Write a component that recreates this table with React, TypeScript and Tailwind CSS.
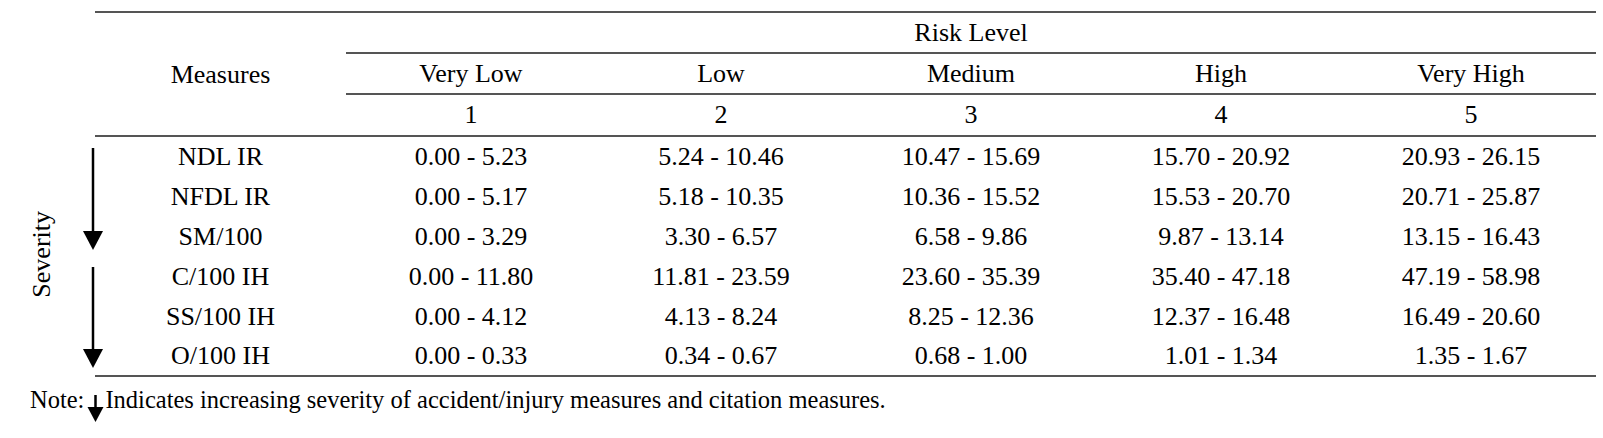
const LEVELS = [
  { name: "Very Low", rank: 1 },
  { name: "Low", rank: 2 },
  { name: "Medium", rank: 3 },
  { name: "High", rank: 4 },
  { name: "Very High", rank: 5 },
];

const ROWS: { measure: string; ranges: string[] }[] = [
  { measure: "NDL IR", ranges: ["0.00 - 5.23", "5.24 - 10.46", "10.47 - 15.69", "15.70 - 20.92", "20.93 - 26.15"] },
  { measure: "NFDL IR", ranges: ["0.00 - 5.17", "5.18 - 10.35", "10.36 - 15.52", "15.53 - 20.70", "20.71 - 25.87"] },
  { measure: "SM/100", ranges: ["0.00 - 3.29", "3.30 - 6.57", "6.58 - 9.86", "9.87 - 13.14", "13.15 - 16.43"] },
  { measure: "C/100 IH", ranges: ["0.00 - 11.80", "11.81 - 23.59", "23.60 - 35.39", "35.40 - 47.18", "47.19 - 58.98"] },
  { measure: "SS/100 IH", ranges: ["0.00 - 4.12", "4.13 - 8.24", "8.25 - 12.36", "12.37 - 16.48", "16.49 - 20.60"] },
  { measure: "O/100 IH", ranges: ["0.00 - 0.33", "0.34 - 0.67", "0.68 - 1.00", "1.01 - 1.34", "1.35 - 1.67"] },
];

function SeverityArrows() {
  return (
    <svg width="20" height="220" viewBox="0 0 20 220" className="shrink-0">
      <line x1="10" y1="0" x2="10" y2="86" stroke="#000" strokeWidth="2.5" />
      <polygon points="0,83 20,83 10,102" fill="#000" />
      <line x1="10" y1="119" x2="10" y2="204" stroke="#000" strokeWidth="2.5" />
      <polygon points="0,201 20,201 10,220" fill="#000" />
    </svg>
  );
}

export default function App() {
  return (
    <div className="w-[1603px] h-[438px] overflow-hidden bg-white text-black font-[Liberation_Serif,serif] text-[26px] leading-[30px]">
      <div className="flex">
        {/* severity label + arrows in the left margin */}
        <div className="flex w-[95px] shrink-0 pt-[148px]">
          <div className="flex h-[220px] w-[83px] shrink-0 items-center justify-center pb-[8px]">
            <span className="rotate-180 [writing-mode:vertical-rl]">Severity</span>
          </div>
          <SeverityArrows />
        </div>

        <div className="mt-[11px] w-[1501px] border-t-2 border-[#555]">
          <div className="grid grid-cols-[251px_repeat(5,250px)]">
            {/* risk level */}
            <div className="h-[41px]" />
            <div className="col-span-5 flex h-[41px] items-center justify-center border-b-2 border-[#555]">
              Risk Level
            </div>

            {/* level names */}
            <div className="flex h-[41px] items-center justify-center">Measures</div>
            {LEVELS.map((l) => (
              <div key={l.name} className="flex h-[41px] items-center justify-center border-b-2 border-[#555]">
                {l.name}
              </div>
            ))}

            {/* ranks */}
            <div className="h-[42px] border-b-2 border-[#555]" />
            {LEVELS.map((l) => (
              <div key={l.rank} className="flex h-[42px] items-center justify-center border-b-2 border-[#555]">
                {l.rank}
              </div>
            ))}

            {ROWS.map((r, i) => {
              const last = i === ROWS.length - 1;
              return [r.measure, ...r.ranges].map((v, j) => (
                <div
                  key={`${r.measure}-${j}`}
                  className={
                    last
                      ? "flex h-[40px] items-center justify-center border-b-2 border-[#555] whitespace-nowrap"
                      : "flex h-[40px] items-center justify-center whitespace-nowrap"
                  }
                >
                  {v}
                </div>
              ));
            })}
          </div>
        </div>
      </div>

      <div className="mt-[8px] flex items-start pl-[30px] text-[24.5px] whitespace-nowrap">
        <span>Note:</span>
        <svg width="21" height="40" viewBox="0 0 21 40" className="shrink-0">
          <line x1="11.5" y1="10" x2="11.5" y2="25" stroke="#000" strokeWidth="2.5" />
          <polygon points="3.5,22 19.5,22 11.5,37" fill="#000" />
        </svg>
        <span>Indicates increasing severity of accident/injury measures and citation measures.</span>
      </div>
    </div>
  );
}
